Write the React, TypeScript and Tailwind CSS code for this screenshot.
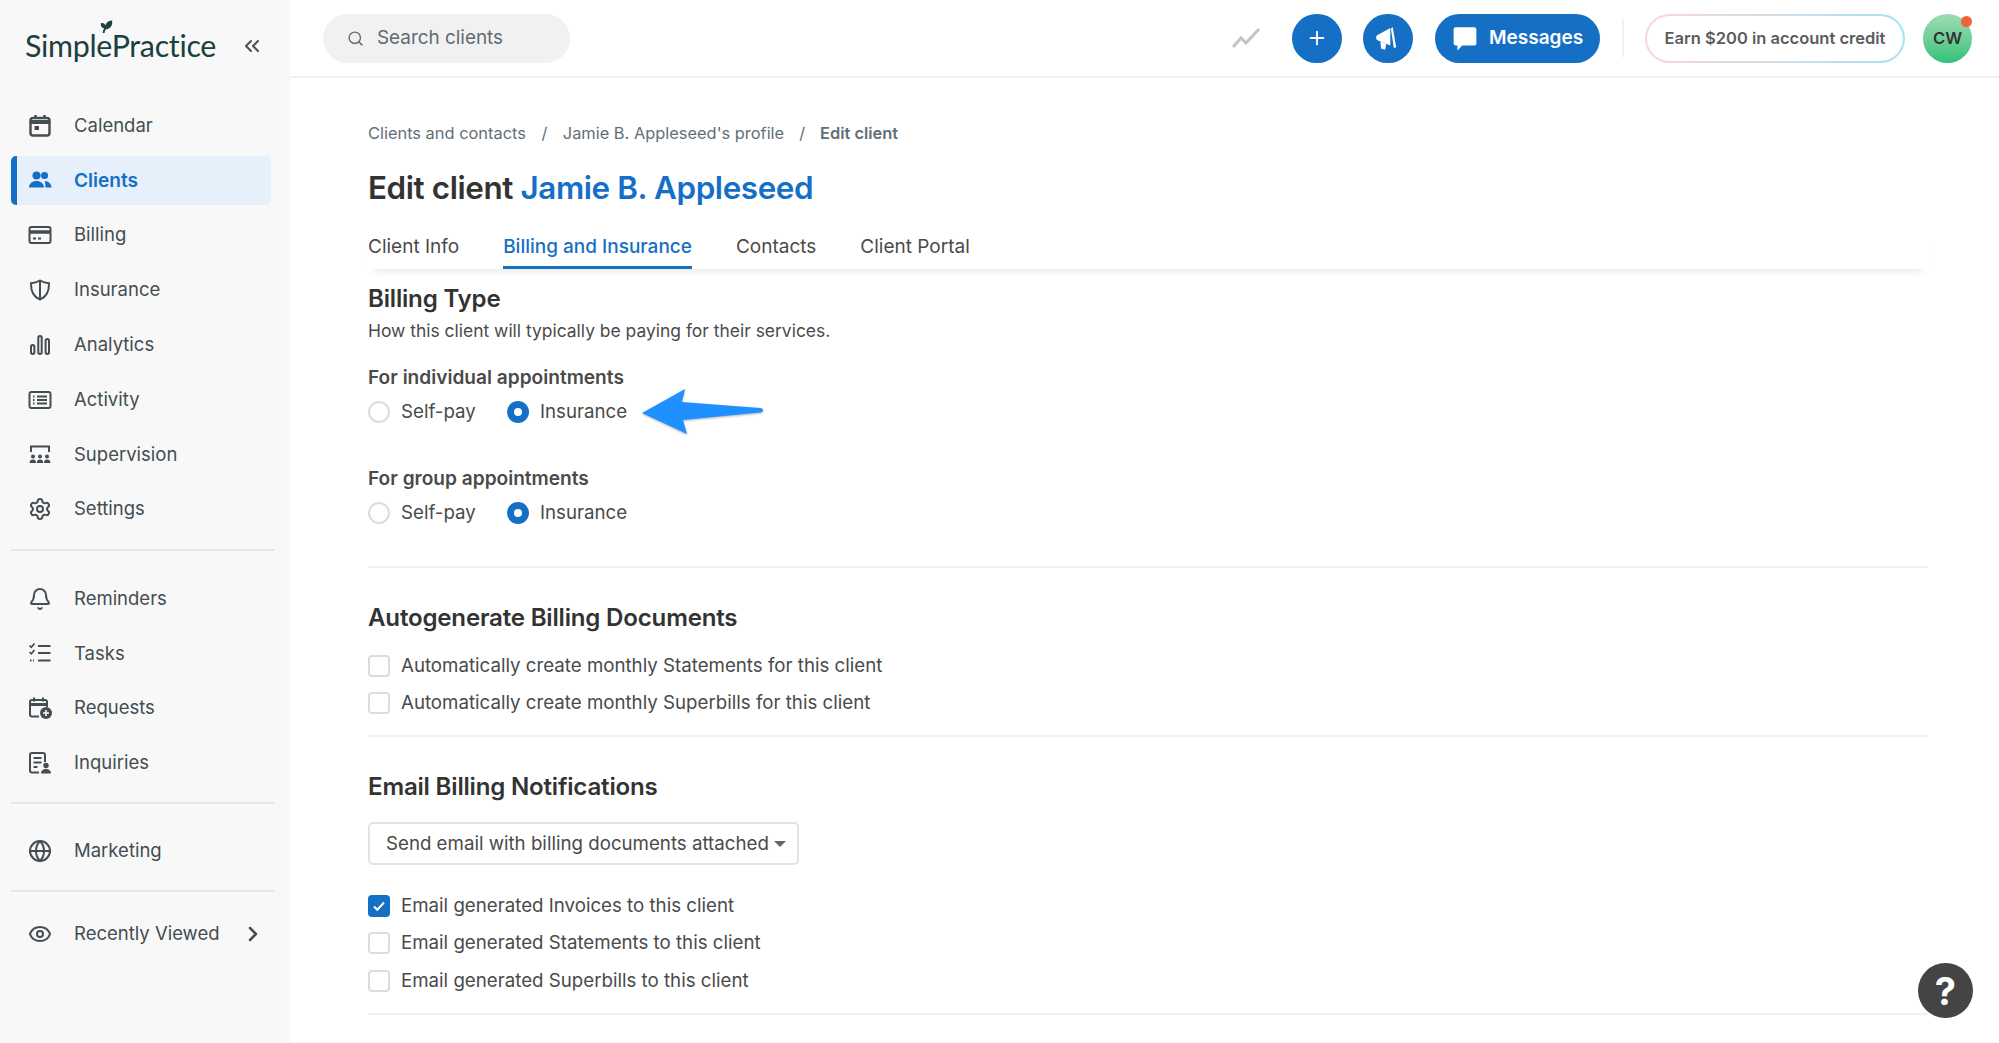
import { ChevronRight, ChevronsLeft, Eye, Globe, Bell, Settings, Search, Plus } from 'lucide-react';
import type { ReactNode } from 'react';

const ICON = 'h-[24px] w-[24px] shrink-0';

function CalendarIcon() {
  return (
    <svg viewBox="0 0 24 24" className={ICON} fill="none" stroke="currentColor" strokeWidth="2.4">
      <rect x="2.500" y="4" width="19" height="17.500" rx="2.500" />
      <path d="M3 8h18" strokeWidth="4" />
      <path d="M7.500 1v4M16.500 1v4" />
      <rect x="6.500" y="12" width="4.500" height="4" fill="currentColor" stroke="none" />
    </svg>
  );
}
function ClientsIcon() {
  return (
    <svg viewBox="0 0 24 24" className={ICON} fill="currentColor">
      <circle cx="8.500" cy="7.500" r="4" />
      <circle cx="16.500" cy="7.500" r="3.600" />
      <path d="M1 19.500c0-4 3.500-6.500 7.500-6.500s7.500 2.500 7.500 6.500z" />
      <path d="M17.500 19.500h6c0-3.500-2.800-6.200-6.700-6.400 0 0 .7 3 .7 6.400z" />
    </svg>
  );
}
function BillingIcon() {
  return (
    <svg viewBox="0 0 24 24" className={ICON} fill="none" stroke="currentColor" strokeWidth="2">
      <rect x="1.500" y="4" width="21" height="16" rx="2" />
      <path d="M2 9h20" strokeWidth="3.500" />
      <path d="M5 15.500h3M10 15.500h3" />
    </svg>
  );
}
function ShieldIcon() {
  return (
    <svg viewBox="0 0 24 24" className={ICON} fill="none" stroke="currentColor" strokeWidth="2">
      <path d="M12 2.500c3 1.700 6 2.500 9 2.700.3 7.800-2.500 13.600-9 16.300-6.500-2.700-9.300-8.500-9-16.300 3-.2 6-1 9-2.700z" />
      <path d="M12 3v18" />
    </svg>
  );
}
function AnalyticsIcon() {
  return (
    <svg viewBox="0 0 24 24" className={ICON} fill="none" stroke="currentColor" strokeWidth="2">
      <rect x="3" y="12" width="3.400" height="9" rx="1.700" />
      <rect x="10.300" y="3" width="3.400" height="18" rx="1.700" />
      <rect x="17.600" y="6" width="3.400" height="15" rx="1.700" />
    </svg>
  );
}
function ActivityIcon() {
  return (
    <svg viewBox="0 0 24 24" className={ICON} fill="none" stroke="currentColor" strokeWidth="2">
      <rect x="1.500" y="4" width="21" height="16" rx="2" />
      <path d="M9 8.500h10M9 12h10M9 15.500h10" />
      <path d="M5 8.500h1.500M5 12h1.500M5 15.500h1.500" />
    </svg>
  );
}
function SupervisionIcon() {
  return (
    <svg viewBox="0 0 24 24" className={ICON} fill="currentColor">
      <path d="M3 10V4.500h18V10" fill="none" stroke="currentColor" strokeWidth="2" />
      <circle cx="5" cy="14.500" r="2" />
      <circle cx="12" cy="14.500" r="2" />
      <circle cx="19" cy="14.500" r="2" />
      <path d="M1.500 21c0-2.500 1.500-3.500 3.500-3.500s3 1 3 3.500zM8.800 21c0-2.500 1.200-3.500 3.200-3.500s3.200 1 3.200 3.500zM16 21c0-2.500 1-3.500 3-3.500s3.500 1 3.500 3.500z" />
    </svg>
  );
}
function TasksIcon() {
  return (
    <svg viewBox="0 0 24 24" className={ICON} fill="none" stroke="currentColor" strokeWidth="2">
      <path d="M10 5h12.500M10 12h12.500M10 19.500h12.500" />
      <path d="M1.500 4.500l1.800 1.800L6.500 2.500M1.500 11l1.800 1.800L6.500 9" strokeWidth="1.700" />
      <path d="M2 19.500h1.500M5 19.500h1" />
    </svg>
  );
}
function RequestsIcon() {
  return (
    <svg viewBox="0 0 24 24" className={ICON} fill="none" stroke="currentColor" strokeWidth="2">
      <path d="M11 20.500H4a2 2 0 0 1-2-2V6a2 2 0 0 1 2-2h13a2 2 0 0 1 2 2v5" />
      <path d="M2 8.500h17" strokeWidth="3" />
      <path d="M6 1.500v4M15 1.500v4" />
      <circle cx="18" cy="17" r="6" fill="currentColor" stroke="none" />
      <path d="M18 14v6M15 17h6" stroke="#f8f8f8" strokeWidth="1.600" />
    </svg>
  );
}
function InquiriesIcon() {
  return (
    <svg viewBox="0 0 24 24" className={ICON} fill="none" stroke="currentColor" strokeWidth="2">
      <path d="M11 21.500H4a2 2 0 0 1-2-2V4a2 2 0 0 1 2-2h11a2 2 0 0 1 2 2v7" />
      <path d="M5.500 7h8M5.500 11.500h8M5.500 16h4" />
      <circle cx="18" cy="14.500" r="2.700" fill="currentColor" stroke="none" />
      <path d="M13 22.500c0-3 2-4.500 5-4.500s5 1.500 5 4.500z" fill="currentColor" stroke="none" />
    </svg>
  );
}

function NavItem({ icon, label, active, trailing }: { icon: ReactNode; label: string; active?: boolean; trailing?: ReactNode }) {
  return (
    <div
      className={`mr-[3px] my-[2.900px] flex h-[49px] items-center rounded-[5px] ${
        active ? 'border-l-[6px] border-[#1570c5] bg-[#e5f0fa] pl-[11px] font-semibold text-[#1570c5]' : 'pl-[17px] text-[#434d52]'
      }`}
    >
      {icon}
      <span className={`ml-[22px] ${active ? 'text-[19.100px]' : 'text-[18.500px]'}`}>{label}</span>
      {trailing}
    </div>
  );
}

function Divider() {
  return <div className="h-[2px] bg-[#e6e6e6]" />;
}

function Sidebar() {
  return (
    <aside className="flex h-full w-[290px] shrink-0 flex-col bg-[#f8f8f8] pl-[11px] pr-[16px]">
      <div className="flex h-[92px] items-center pl-[14px] pr-[10px]">
        <div className="relative font-['Lato',sans-serif] text-[30.400px] tracking-[-0.3px] text-[#1b403f]">
          SimplePractice
          <svg viewBox="0 0 16 16" className="absolute left-[74px] top-[-4px] h-[15px] w-[15px]" fill="#1b403f">
            <path d="M4 15c0-2 .5-3.500 1.500-5C3 9.500 1.500 7.500 2 4.500c2.500-.5 4.500.5 5 2.500.5-3 2.500-5 7-5.500.5 5-1 8.500-6.500 9.500-1 1-1.500 2.500-1.500 4z" />
          </svg>
        </div>
        <ChevronsLeft className="ml-auto h-[24px] w-[24px] text-[#4f4f4f]" strokeWidth={2} />
      </div>
      <nav className="mt-[6.300px] flex flex-col">
        <NavItem icon={<CalendarIcon />} label="Calendar" />
        <NavItem icon={<ClientsIcon />} label="Clients" active />
        <NavItem icon={<BillingIcon />} label="Billing" />
        <NavItem icon={<ShieldIcon />} label="Insurance" />
        <NavItem icon={<AnalyticsIcon />} label="Analytics" />
        <NavItem icon={<ActivityIcon />} label="Activity" />
        <NavItem icon={<SupervisionIcon />} label="Supervision" />
        <NavItem icon={<Settings className={ICON} strokeWidth={2} />} label="Settings" />
      </nav>
      <div className="mt-[12.700px] mb-[20px]"><Divider /></div>
      <nav className="flex flex-col">
        <NavItem icon={<Bell className={ICON} strokeWidth={2} />} label="Reminders" />
        <NavItem icon={<TasksIcon />} label="Tasks" />
        <NavItem icon={<RequestsIcon />} label="Requests" />
        <NavItem icon={<InquiriesIcon />} label="Inquiries" />
      </nav>
      <div className="mt-[11.500px] mb-[20px]"><Divider /></div>
      <NavItem icon={<Globe className={ICON} strokeWidth={2} />} label="Marketing" />
      <div className="mt-[11.700px] mb-[14px]"><Divider /></div>
      <NavItem
        icon={<Eye className={ICON} strokeWidth={2} />}
        label="Recently Viewed"
        trailing={<ChevronRight className="ml-auto mr-[6px] h-[24px] w-[24px]" strokeWidth={2.500} />}
      />
    </aside>
  );
}

function TopBar() {
  return (
    <header className="flex h-[78px] shrink-0 items-center border-b-2 border-[#f1f1f1] pl-[33px] pr-[27px]">
      <div className="flex h-[49px] w-[247px] items-center rounded-full bg-[#f1f1f1] pl-[24px] text-[#5f6a70]">
        <Search className="h-[17px] w-[17px]" strokeWidth={2} />
        <span className="ml-[13px] mt-[1px] text-[18.900px]">Search clients</span>
      </div>
      <svg viewBox="0 0 30 24" className="ml-auto h-[24px] w-[30px]" fill="none" stroke="#c4c4c4" strokeWidth="3">
        <path d="M2 21l8-9 5 5L28 3" />
      </svg>
      <button className="ml-[31px] flex h-[49px] w-[50px] items-center justify-center rounded-full bg-[#1570c5] text-white">
        <Plus className="h-[22px] w-[22px]" strokeWidth={2} />
      </button>
      <button className="ml-[21px] flex h-[49px] w-[50px] items-center justify-center rounded-full bg-[#1570c5]">
        <svg viewBox="0 0 24 24" className="h-[28px] w-[28px]" fill="white">
          <path d="M3 9.500l11-6v15l-11-4.500c-1.500-.6-1.500-3.900 0-4.500z" />
          <path d="M16 2.500l3 17.500-2 .5L14.500 4z" />
          <path d="M5.500 15l5 2-1 5-3.500-1z" />
        </svg>
      </button>
      <button className="ml-[22px] flex h-[49px] w-[165px] items-center rounded-full bg-[#1570c5] pl-[17px] font-semibold text-white">
        <svg viewBox="0 0 24 24" className="h-[29px] w-[26px]" fill="white">
          <path d="M3.500 1.500h17A2 2 0 0 1 22.500 3.500v13a2 2 0 0 1-2 2H9.500L5 23v-4.500H3.500a2 2 0 0 1-2-2v-13a2 2 0 0 1 2-2z" />
        </svg>
        <span className="ml-[11px] mt-[1px] text-[19px]">Messages</span>
      </button>
      <div className="ml-[22px] h-[38px] w-[2px] bg-[#f1f1f1]" />
      <div className="ml-[21px] h-[49px] w-[260px] rounded-full bg-gradient-to-r from-[#fbd5d8] to-[#a2e2f5] p-[2px]">
        <div className="flex h-full items-center justify-center rounded-full bg-white pt-[1px] text-[16.500px] font-semibold text-[#5c5c5c]">
          Earn $200 in account credit
        </div>
      </div>
      <div className="relative ml-[18px] flex h-[49px] w-[49px] items-center justify-center rounded-full bg-gradient-to-t from-[#2cc179] to-[#9ddcb4] pt-[1px] text-[16.600px] font-semibold text-[#333]">
        CW
        <span className="absolute right-0 top-[2px] h-[11px] w-[11px] rounded-full bg-[#f4603c]" />
      </div>
    </header>
  );
}

function Radio({ checked, label }: { checked?: boolean; label: string }) {
  return (
    <label className="flex items-center">
      <span
        className={`flex h-[22px] w-[22px] items-center justify-center rounded-full ${
          checked ? 'bg-[#1570c5]' : 'border-2 border-[#dcdcdc] bg-white'
        }`}
      >
        {checked && <span className="h-[8px] w-[8px] rounded-full bg-white" />}
      </span>
      <span className="ml-[11px]">{label}</span>
    </label>
  );
}

function RadioRow({ arrow }: { arrow?: boolean }) {
  return (
    <div className="mt-[12px] flex h-[22px] items-center">
      <div className="w-[139px]"><Radio label="Self-pay" /></div>
      <Radio checked label="Insurance" />
      {arrow && (
        <svg viewBox="0 0 124 46" className="ml-[14px] h-[46px] w-[124px] shrink-0 drop-shadow-[0_1px_1px_rgba(0,0,0,0.3)]" fill="#1e90ff">
          <path d="M1 24L44 0l-3 13 78 6c4 .5 4 4 0 4.500L42 31l4 14z" />
        </svg>
      )}
    </div>
  );
}

function Check({ checked, label }: { checked?: boolean; label: string }) {
  return (
    <label className="flex h-[22px] items-center">
      <span
        className={`flex h-[22px] w-[22px] items-center justify-center rounded-[4px] ${
          checked ? 'bg-[#1570c5]' : 'border-2 border-[#dcdcdc] bg-white'
        }`}
      >
        {checked && (
          <svg viewBox="0 0 16 16" className="h-[16px] w-[16px]" fill="none" stroke="white" strokeWidth="2">
            <path d="M3 8.500l3.300 3.300L13 4.500" />
          </svg>
        )}
      </span>
      <span className="ml-[11px]">{label}</span>
    </label>
  );
}

function Section({ title, children }: { title: string; children: ReactNode }) {
  return (
    <section>
      <h2 className="text-[24.100px] font-semibold leading-[30px] tracking-[-0.2px] text-[#333]">{title}</h2>
      {children}
    </section>
  );
}

function Rule() {
  return <div className="h-[2px] bg-[#f1f1f1]" />;
}

export default function App() {
  return (
    <div className="flex h-[1043px] w-[1999px] overflow-hidden bg-white font-['Inter',sans-serif] text-[18.700px] text-[#4a4a4a]">
      <Sidebar />
      <main className="flex min-w-0 flex-1 flex-col">
        <TopBar />
        <div className="relative flex-1 pl-[78px] pr-[71px]">
          <div className="mt-[45px] flex h-[20px] items-center text-[16.400px] text-[#5f6f7a]">
            <span>Clients and contacts</span>
            <span className="mx-[15.500px]">/</span>
            <span>Jamie B. Appleseed's profile</span>
            <span className="mx-[15px]">/</span>
            <span className="font-semibold">Edit client</span>
          </div>
          <h1 className="mt-[23px] text-[31.400px] font-semibold leading-[44px] tracking-[-0.4px] text-[#333]">
            Edit client <span className="text-[#1570c5]">Jamie B. Appleseed</span>
          </h1>
          <div className="mt-[17.500px] flex h-[41.500px] gap-[44px] text-[19px] shadow-[0_7px_8px_-6px_rgba(0,0,0,0.12)]">
            <span className="pt-[5px]">Client Info</span>
            <span className="border-b-[3px] border-[#1570c5] pt-[5px] font-medium text-[#1570c5]">Billing and Insurance</span>
            <span className="pt-[5px]">Contacts</span>
            <span className="pt-[5px]">Client Portal</span>
          </div>
          <div className="mt-[14.500px]">
            <Section title="Billing Type">
              <p className="mt-[4.500px] text-[17.460px] leading-[26px]">How this client will typically be paying for their services.</p>
              <h3 className="mt-[21.300px] text-[19.100px] font-semibold leading-[24px]">For individual appointments</h3>
              <RadioRow arrow />
              <h3 className="mt-[42.300px] text-[19.100px] font-semibold leading-[24px]">For group appointments</h3>
              <RadioRow />
            </Section>
            <div className="mt-[42px]"><Rule /></div>
            <div className="mt-[35px]">
              <Section title="Autogenerate Billing Documents">
                <div className="mt-[22px] flex flex-col gap-[15.600px]">
                  <Check label="Automatically create monthly Statements for this client" />
                  <Check label="Automatically create monthly Superbills for this client" />
                </div>
              </Section>
            </div>
            <div className="mt-[20.400px]"><Rule /></div>
            <div className="mt-[35px]">
              <Section title="Email Billing Notifications">
                <div className="mt-[20.500px] flex h-[43px] w-[431px] items-center rounded-[5px] border-2 border-[#e3e3e3] pl-[16px]">
                  Send email with billing documents attached
                  <span className="ml-[5px] h-0 w-0 border-x-[6px] border-t-[6px] border-x-transparent border-t-[#666]" />
                </div>
                <div className="mt-[29.500px] flex flex-col gap-[15.600px]">
                  <Check checked label="Email generated Invoices to this client" />
                  <Check label="Email generated Statements to this client" />
                  <Check label="Email generated Superbills to this client" />
                </div>
              </Section>
            </div>
            <div className="mt-[21px]"><Rule /></div>
          </div>
          <button className="absolute bottom-[25px] right-[26px] flex h-[55px] w-[55px] items-center justify-center rounded-full bg-[#444] text-[38px] font-bold leading-none text-white">
            ?
          </button>
        </div>
      </main>
    </div>
  );
}
